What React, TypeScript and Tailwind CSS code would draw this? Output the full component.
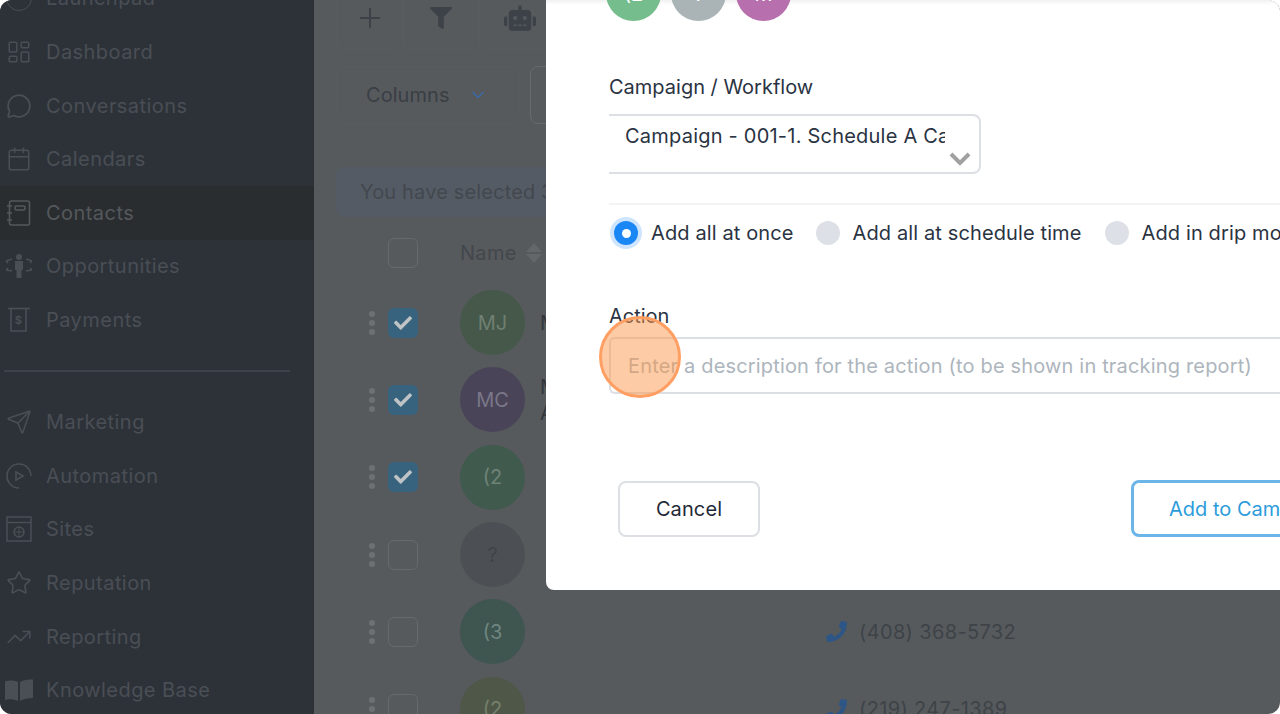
import { Calendar, ChevronDown, LayoutDashboard, MessageCircle, Plus, Send, Star, TrendingUp } from "lucide-react"
import { FaCheck, FaFilter, FaPhoneAlt, FaRobot } from "react-icons/fa"
import type { ReactNode } from "react"

const iconClass = "w-[26px] h-[26px] shrink-0"

function ContactsIcon() {
    return (
        <svg viewBox="0 0 26 26" fill="none" stroke="currentColor" strokeWidth="1.6" className={iconClass}>
            <rect x="3.5" y="1" width="20" height="24" rx="2" />
            <rect x="9" y="6" width="10" height="4" rx="1.5" />
            <path d="M1 6h5M1 13h5M1 20h5" />
        </svg>
    )
}

function OpportunitiesIcon() {
    return (
        <svg viewBox="0 0 28 26" fill="currentColor" className="w-[28px] h-[26px] shrink-0 -mx-[1px]">
            <circle cx="14" cy="4" r="3" />
            <path d="M10 8h8v9h-1.5v8h-5v-8H10z" />
            <path d="M1 8l6-2M1 8l2 2M1 17l6 1M1 17l2-2M27 8l-6-2M27 8l-2 2M27 17l-6 1M27 17l-2-2" stroke="currentColor" strokeWidth="1.4" fill="none" />
        </svg>
    )
}

function PaymentsIcon() {
    return (
        <svg viewBox="0 0 26 26" fill="none" stroke="currentColor" strokeWidth="1.6" className={iconClass}>
            <path d="M2 1.5h22" />
            <path d="M5 1.500v22.500h15V1.500" />
            <text x="12.500" y="17" textAnchor="middle" fontSize="11" fontWeight="700" fill="currentColor" stroke="none" fontFamily="Inter, sans-serif">$</text>
        </svg>
    )
}

function AutomationIcon() {
    return (
        <svg viewBox="0 0 26 26" fill="none" stroke="currentColor" strokeWidth="1.6" className={iconClass}>
            <path d="M25 13A12 12 0 1 0 13 25" />
            <path d="M10 9l7 4-7 4z" />
        </svg>
    )
}

function SitesIcon() {
    return (
        <svg viewBox="0 0 26 26" fill="none" stroke="currentColor" strokeWidth="1.500" className={iconClass}>
            <rect x="1" y="1" width="24" height="24" />
            <path d="M1 6.500h24" />
            <circle cx="13" cy="16" r="5" />
            <path d="M8 16h10M13 11v10" strokeWidth="1" />
        </svg>
    )
}

function BookIcon() {
    return (
        <svg viewBox="0 0 28 22" fill="currentColor" className="w-[28px] h-[22px] shrink-0 -mx-[1px]">
            <path d="M0 2.500C4 1 9 1 13 3v19C9 20 4 20 0 21z" />
            <path d="M28 0.500C23 0.500 18 1 15 3v19c3-2 8-3 13-3z" />
        </svg>
    )
}

const topItems: { label: string; icon: ReactNode; active?: boolean }[] = [
    { label: "Launchpad", icon: <div className="w-[26px] h-[26px] rounded-full border border-current shrink-0" /> },
    { label: "Dashboard", icon: <LayoutDashboard className={iconClass} strokeWidth={1.4} /> },
    { label: "Conversations", icon: <MessageCircle className={iconClass} strokeWidth={1.6} /> },
    { label: "Calendars", icon: <Calendar className={iconClass} strokeWidth={1.4} /> },
    { label: "Contacts", icon: <ContactsIcon />, active: true },
    { label: "Opportunities", icon: <OpportunitiesIcon /> },
    { label: "Payments", icon: <PaymentsIcon /> },
]

const bottomItems: { label: string; icon: ReactNode }[] = [
    { label: "Marketing", icon: <Send className={iconClass} strokeWidth={1.4} /> },
    { label: "Automation", icon: <AutomationIcon /> },
    { label: "Sites", icon: <SitesIcon /> },
    { label: "Reputation", icon: <Star className={iconClass} strokeWidth={1.5} /> },
    { label: "Reporting", icon: <TrendingUp className="w-[28px] h-[26px] shrink-0 -mx-[1px]" strokeWidth={1.4} /> },
    { label: "Knowledge Base", icon: <BookIcon /> },
]

function NavItem({ label, icon, active }: { label: string; icon: ReactNode; active?: boolean }) {
    return (
        <div className={`h-[53.6px] flex items-center gap-[14px] pl-[6px] text-[20px] tracking-[0.45px] ${active ? "bg-[#2a2d30] text-[#54585c]" : "text-[#4a4e55]"}`}>
            {icon}
            <span>{label}</span>
        </div>
    )
}

const rows = [
    { initials: "MJ", color: "bg-[#45584a] text-[#6f7f72]", checked: true, name: "M" },
    { initials: "MC", color: "bg-[#4a4459] text-[#7a7788]", checked: true, name: "M", second: "A" },
    { initials: "(2", color: "bg-[#405a4e] text-[#6f8277]", checked: true, name: "" },
    { initials: "?", color: "bg-[#4c5054] text-[#3f4347]", checked: false, name: "" },
    { initials: "(3", color: "bg-[#3f5550] text-[#6f8580]", checked: false, name: "", phone: "(408) 368-5732" },
    { initials: "(2", color: "bg-[#4f5748] text-[#75806c]", checked: false, name: "", phone: "(219) 247-1389" },
]

function ToolButton({ width, children }: { width: string; children: ReactNode }) {
    return (
        <div className={`${width} h-[50px] pb-[14px] flex items-center justify-center border-x border-b border-[#585c5f] rounded-b-md text-[#3c4248]`}>
            {children}
        </div>
    )
}

function Radio({ label, selected }: { label: string; selected?: boolean }) {
    return (
        <label className="flex items-center gap-[13px] text-[20px] tracking-[0.12px] text-[#2a3342]">
            {selected ? (
                <span className="w-[24px] h-[24px] rounded-full bg-[#1b87f5] flex items-center justify-center ring-4 ring-[#cfe5fd]">
                    <span className="w-[9px] h-[9px] rounded-full bg-white" />
                </span>
            ) : (
                <span className="w-[24px] h-[24px] rounded-full bg-[#dde1e7]" />
            )}
            <span className="whitespace-nowrap">{label}</span>
        </label>
    )
}

export default function App() {
    return (
        <div className="w-[1280px] h-[714px] bg-white" style={{ fontFamily: "Inter, sans-serif" }}>
            <div className="relative w-full h-full rounded-[12px] overflow-hidden flex bg-[#565a5d]">
                <aside className="w-[314px] shrink-0 bg-[#2d3239]">
                    <div className="-mt-[28.400px]">
                        {topItems.map((item) => (
                            <NavItem key={item.label} {...item} />
                        ))}
                    </div>
                    <div className="mt-[23px] mb-[23.700px] ml-[4px] w-[286px] h-[2px] bg-[#3d4149]" />
                    <div>
                        {bottomItems.map((item) => (
                            <NavItem key={item.label} {...item} />
                        ))}
                    </div>
                </aside>

                <main className="flex-1 min-w-0 overflow-hidden pl-[22px]">
                    <div className="flex">
                        <ToolButton width="w-[67px]"><Plus className="w-[32px] h-[32px]" strokeWidth={1.5} /></ToolButton>
                        <ToolButton width="w-[76px]"><FaFilter className="w-[22px] h-[22px]" /></ToolButton>
                        <ToolButton width="w-[82px]"><FaRobot className="w-[32px] h-[28px]" /></ToolButton>
                    </div>

                    <div className="mt-[16px] flex items-center gap-[10px]">
                        <div className="w-[184px] h-[58px] flex items-center gap-[18px] pl-[29px] border border-[#585c5f] rounded-lg text-[20px] tracking-[0.05px] text-[#3a3f45]">
                            Columns
                            <ChevronDown className="w-[20px] h-[20px] text-[#3b6aa6]" strokeWidth={1.8} />
                        </div>
                        <div className="w-[200px] h-[58px] border border-[#666a6d] rounded-lg" />
                    </div>

                    <div className="mt-[44px] h-[50px] flex items-center pl-[24px] rounded-lg bg-[#555b65] text-[20px] tracking-[0.15px] text-[#43484e] whitespace-nowrap -translate-y-[1px]">
                        You have selected 3
                    </div>

                    <div className="h-[50px] mt-[10px] flex items-center pl-[52px]">
                        <span className="w-[30px] h-[30px] rounded-md border border-[#666a6d]" />
                        <span className="ml-[42px] text-[20px] tracking-[0.3px] text-[#43474b]">Name</span>
                        <span className="ml-[9px] flex flex-col gap-[2px]">
                            <span className="w-0 h-0 border-x-[8px] border-x-transparent border-b-[9px] border-b-[#63676a]" />
                            <span className="w-0 h-0 border-x-[8px] border-x-transparent border-t-[9px] border-t-[#63676a]" />
                        </span>
                    </div>

                    <div className="mt-[6px]">
                        {rows.map((row, i) => (
                            <div key={i} className="h-[77.300px] flex items-center pl-[33px]">
                                <span className="w-[8px] flex flex-col gap-[3px] shrink-0">
                                    <span className="w-[6px] h-[6px] rounded-full bg-[#6d7173]" />
                                    <span className="w-[6px] h-[6px] rounded-full bg-[#6d7173]" />
                                    <span className="w-[6px] h-[6px] rounded-full bg-[#6d7173]" />
                                </span>
                                {row.checked ? (
                                    <span className="ml-[11px] w-[30px] h-[30px] rounded-md bg-[#38637e] flex items-center justify-center shrink-0">
                                        <FaCheck className="w-[18px] h-[18px] text-[#bfc3c5]" />
                                    </span>
                                ) : (
                                    <span className="ml-[11px] w-[30px] h-[30px] rounded-md border border-[#666a6d] shrink-0" />
                                )}
                                <span className={`ml-[42px] w-[65px] h-[65px] rounded-full flex items-center justify-center text-[20px] shrink-0 ${row.color}`}>
                                    {row.initials}
                                </span>
                                <span className="ml-[15px] w-[286px] shrink-0 text-[20px] leading-[26px] text-[#33373b]">
                                    {row.name}
                                    {row.second && <><br />{row.second}</>}
                                </span>
                                {row.phone && (
                                    <span className="flex items-center gap-[12px] text-[20px] tracking-[0.35px] text-[#3e4348] whitespace-nowrap">
                                        <FaPhoneAlt className="w-[21px] h-[21px] text-[#2d5687] -scale-x-100" />
                                        {row.phone}
                                    </span>
                                )}
                            </div>
                        ))}
                    </div>
                </main>

                {/* modal sits over the dimmed page and runs off the top and right edge */}
                <section className="absolute left-[546px] top-0 w-[900px] h-[590px] bg-white rounded-bl-lg overflow-hidden pl-[63px]">
                    <div className="absolute left-0 right-0 top-0 h-[5px] bg-gradient-to-b from-[#f1f1f1] to-white" />
                    <div className="relative -mt-[34px] -ml-[3px] flex gap-[10px] text-white text-[20px]">
                        <span className="w-[55px] h-[55px] rounded-full bg-[#75bd8c] flex items-center justify-center">(2</span>
                        <span className="w-[55px] h-[55px] rounded-full bg-[#aab3b5] flex items-center justify-center">?</span>
                        <span className="w-[55px] h-[55px] rounded-full bg-[#b86fae] flex items-center justify-center">M</span>
                    </div>

                    <div className="mt-[54px] h-[24px] leading-[24px] text-[20px] text-[#2a3342]">Campaign / Workflow</div>

                    <div className="relative mt-[15px] w-[372px] h-[60px] border-y-2 border-r-2 border-[#dcdfe3] rounded-r-lg pl-[16px] pt-[5px]">
                        <div className="w-[320px] overflow-hidden whitespace-nowrap text-[20px] tracking-[0.22px] text-[#2a3342]">
                            Campaign - 001-1. Schedule A Call
                        </div>
                        <svg viewBox="0 0 22 14" fill="none" stroke="#a1a1a1" strokeWidth="4" className="absolute right-[8px] bottom-[6px] w-[22px] h-[14px]">
                            <path d="M2 2l9 9 9-9" />
                        </svg>
                    </div>

                    <div className="mt-[29px] h-[2px] bg-[#f3f4f6]" />

                    <div className="mt-[16px] h-[24px] flex items-center pl-[5px]">
                        <Radio label="Add all at once" selected />
                        <span className="w-[22px]" />
                        <Radio label="Add all at schedule time" />
                        <span className="w-[23px]" />
                        <Radio label="Add in drip mode" />
                    </div>

                    <div className="mt-[59px] h-[24px] leading-[24px] text-[20px] text-[#2a3342]">Action</div>

                    <div className="mt-[9px] h-[57px] flex items-center pl-[17px] border-2 border-r-0 border-[#dcdfe3] rounded-l-md text-[20px] tracking-[0.17px] text-[#adb5bd] whitespace-nowrap">
                        Enter a description for the action (to be shown in tracking report)
                    </div>

                    <div className="mt-[86px] flex items-center pl-[9px] gap-[371px]">
                        <button className="w-[142px] h-[56px] rounded-lg border-2 border-[#dcdfe3] text-[20px] tracking-[0.1px] text-[#1f2937]">Cancel</button>
                        <button className="w-[220px] h-[57px] rounded-lg border-[3px] border-[#6bb5e8] text-[20px] text-[#2d9cdb] text-left pl-[35px] whitespace-nowrap">Add to Campaign</button>
                    </div>
                </section>

                <div className="absolute left-[599px] top-[316px] w-[82px] h-[82px] rounded-full border-[3px] border-[#ff9f63] bg-[#fb9a4d]/50" />
            </div>
        </div>
    )
}
